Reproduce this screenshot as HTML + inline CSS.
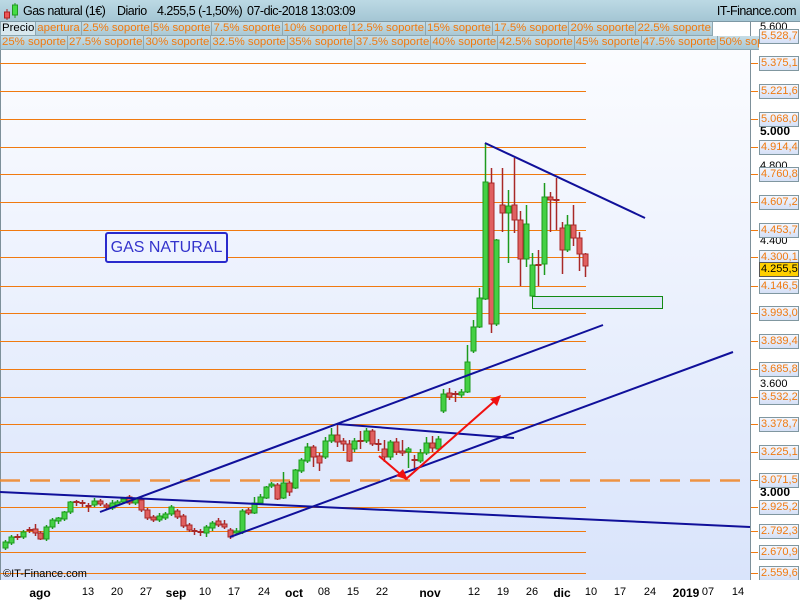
<!DOCTYPE html>
<html><head><meta charset="utf-8"><style>
*{margin:0;padding:0;box-sizing:border-box}
body{width:800px;height:600px;overflow:hidden;font-family:"Liberation Sans",sans-serif;background:#fff;position:relative}
#hdr{position:absolute;left:0;top:0;width:800px;height:22px;background:linear-gradient(#bcd9e4,#a4c6d4);border-bottom:1px solid #7d98a4;font-size:12.5px;color:#000}
#hdr span{position:absolute;top:4px;white-space:nowrap;letter-spacing:-0.5px}
.row{position:absolute;left:0;height:14px;white-space:nowrap;font-size:11.4px;line-height:13px}
.row span{display:inline-block;height:14px;padding:0 1px;background:linear-gradient(#c6dde6,#a9c8d4);border:1px solid #8ea8b2;border-top:none;color:#f07a10;margin-right:-1px}
.row span.p{background:#d8e8ee;color:#000}
#ax{position:absolute;left:0;top:580px;width:800px;height:20px;background:#fff;font-size:11px}
#ax div{position:absolute;top:6px;transform:translateX(-50%)}
#ax b{font-weight:bold;font-size:12px}
.lb{position:absolute;left:759px;width:40px;height:15px;border:1px solid #8097a0;background:linear-gradient(#f4f7ff,#d5e0f6);color:#f07a10;font-size:11px;line-height:13px;padding-left:1px}
.bk{position:absolute;left:760px;font-size:11px;color:#000;line-height:11px}
</style></head><body>
<svg id="c" width="800" height="600" style="position:absolute;left:0;top:0">
<defs><linearGradient id="bg" x1="0" y1="0" x2="0" y2="1"><stop offset="0" stop-color="#fbfcff"/><stop offset="1" stop-color="#d9e4fb"/></linearGradient></defs>
<rect x="0" y="50" width="750" height="530" fill="url(#bg)"/>
<rect x="750" y="22" width="50" height="558" fill="#fff"/>
<line x1="750.5" y1="22" x2="750.5" y2="580" stroke="#7d909a" stroke-width="1"/>
<line x1="0" y1="580.5" x2="750" y2="580.5" stroke="#7d909a" stroke-width="1"/>
<line x1="0.5" y1="50" x2="0.5" y2="580" stroke="#7d909a"/>
<g id="g"></g>
</svg>
<div id="hdr"><svg width="20" height="20" style="position:absolute;left:2px;top:1px"><line x1="5" y1="8" x2="5" y2="19" stroke="#a22"/><rect x="2.5" y="11" width="5" height="6" fill="#e55" stroke="#a22"/><line x1="13" y1="2" x2="13" y2="17" stroke="#292"/><rect x="10.5" y="4" width="5" height="10" fill="#4d4" stroke="#292"/></svg><span style="left:23px">Gas natural (1€)</span><span style="left:117px">Diario</span><span style="left:157px">4.255,5 (-1,50%)</span><span style="left:247px">07-dic-2018 13:03:09</span><span style="right:4px">IT-Finance.com</span></div>
<div class="row" style="top:22px"><span class="p">Precio</span><span>apertura</span><span>2.5% soporte</span><span>5% soporte</span><span>7.5% soporte</span><span>10% soporte</span><span>12.5% soporte</span><span>15% soporte</span><span>17.5% soporte</span><span>20% soporte</span><span>22.5% soporte</span></div>
<div class="row" style="top:36px;width:759px;overflow:hidden"><span>25% soporte</span><span>27.5% soporte</span><span>30% soporte</span><span>32.5% soporte</span><span>35% soporte</span><span>37.5% soporte</span><span>40% soporte</span><span>42.5% soporte</span><span>45% soporte</span><span>47.5% soporte</span><span>50% soporte</span></div>
<div class="bk" style="top:22px">5.600</div>
<div class="bk" style="top:126px;font-weight:bold;font-size:12px">5.000</div>
<div class="bk" style="top:161px">4.800</div>
<div class="bk" style="top:236px">4.400</div>
<div class="bk" style="top:379px">3.600</div>
<div class="bk" style="top:487px;font-weight:bold;font-size:12px">3.000</div>
<div id="labels"></div>
<div style="position:absolute;left:3px;top:568px;font-size:11px">©IT-Finance.com</div>
<div style="position:absolute;left:105px;top:232px;width:123px;height:31px;border:2px solid #2a2acc;border-radius:3px;color:#3333cc;font-size:16px;line-height:27px;text-align:center;background:#eef3ff">GAS NATURAL</div>
<div id="ax"><div style="left:40px"><b>ago</b></div><div style="left:88px">13</div><div style="left:117px">20</div><div style="left:146px">27</div><div style="left:176px"><b>sep</b></div><div style="left:205px">10</div><div style="left:234px">17</div><div style="left:264px">24</div><div style="left:294px"><b>oct</b></div><div style="left:324px">08</div><div style="left:353px">15</div><div style="left:382px">22</div><div style="left:430px"><b>nov</b></div><div style="left:474px">12</div><div style="left:503px">19</div><div style="left:532px">26</div><div style="left:562px"><b>dic</b></div><div style="left:591px">10</div><div style="left:620px">17</div><div style="left:650px">24</div><div style="left:686px"><b>2019</b></div><div style="left:708px">07</div><div style="left:738px">14</div></div>
<script>
var ns="http://www.w3.org/2000/svg",g=document.getElementById("g");
function el(t,a){var e=document.createElementNS(ns,t);for(var k in a)e.setAttribute(k,a[k]);g.appendChild(e);return e}
var lv=[["5.528,7",36,0],["5.375,1",63,1],["5.221,6",91,1],["5.068,0",119,1],["4.914,4",147,1],["4.760,8",174,1],["4.607,2",202,1],["4.453,7",230,1],["4.300,1",257,1],["4.146,5",286,1],["3.993,0",313,1],["3.839,4",341,1],["3.685,8",369,1],["3.532,2",397,1],["3.378,7",424,1],["3.225,1",452,1],["3.071,5",480,2],["2.925,2",507,1],["2.792,3",531,1],["2.670,9",552,1],["2.559,6",573,1]];
var L="";
lv.forEach(function(l){
 if(l[2]==1)el("line",{x1:0,y1:l[1]+.5,x2:586,y2:l[1]+.5,stroke:"#f07a10","stroke-width":1});
 if(l[2]==2)el("line",{x1:0,y1:l[1]+.5,x2:750,y2:l[1]+.5,stroke:"#f08a30","stroke-width":2.5,"stroke-dasharray":"20,10","opacity":.9});
 el("line",{x1:751,y1:l[1]+.5,x2:758,y2:l[1]+.5,stroke:"#f07a10"});
 L+='<div class="lb" style="top:'+(l[1]-7)+'px">'+l[0]+'</div>';
});
L+='<div class="lb" style="top:262px;background:#ffd000;color:#000;border-color:#555">4.255,5</div>';
document.getElementById("labels").innerHTML=L;
var c=[[5,548,542,550,540],[11,543,537,545,535],[17,537,537,540,534],[23,537,532,539,530],[29,530,530,533,527],[35,529,533,524,536],[40,533,539,531,540],[46,539,527,541,525],[52,527,520,529,518],[58,521,518,524,517],[64,519,512,521,511],[70,512,502,514,501],[76,502,502,500,506],[82,503,503,500,507],[88,506,506,503,512],[94,505,501,507,498],[100,501,504,499,506],[106,505,507,503,510],[112,508,503,510,500],[117,505,502,506,500],[123,502,499,504,497],[129,497,503,495,505],[135,503,499,505,498],[141,500,510,498,512],[147,510,518,508,520],[153,517,520,515,522],[159,520,516,522,513],[165,518,514,520,512],[171,514,507,516,505],[177,511,517,509,519],[183,516,526,514,528],[189,525,530,523,532],[194,531,531,528,535],[200,532,533,529,536],[206,533,527,537,525],[212,528,523,531,521],[218,521,525,518,527],[224,524,527,520,529],[230,530,537,528,539],[236,533,531,535,528],[242,532,511,534,509],[248,510,513,508,515],[254,513,503,514,497],[260,503,497,505,494],[266,498,487,499,486],[271,486,484,488,482],[277,485,499,483,500],[283,498,483,499,472],[289,483,492,481,496],[295,488,470,489,469],[301,471,460,473,458],[307,461,447,463,443],[313,447,457,445,467],[319,456,463,453,471],[325,457,441,459,437],[331,441,435,443,428],[337,435,442,424,447],[343,441,444,438,451],[349,444,461,440,462],[354,449,441,452,438],[360,441,441,431,449],[366,441,431,443,428],[372,431,444,429,446],[378,444,444,439,451],[384,449,457,440,462],[390,457,442,460,440],[396,442,452,438,455],[402,451,453,440,456],[408,452,449,468,447],[414,460,460,455,468],[420,461,453,463,449],[426,453,443,455,437],[432,443,448,436,452],[438,449,439,451,436],[443,411,394,413,389],[449,393,397,388,400],[455,394,394,391,402],[461,395,392,398,389],[467,392,362,393,345],[473,351,327,353,320],[479,327,298,328,288],[485,299,182,300,143],[491,183,324,168,333],[496,324,240,326,239],[502,205,213,168,232],[508,213,206,263,190],[514,205,220,158,233],[520,220,259,211,286],[526,259,224,267,205],[532,296,265,297,253],[538,265,265,250,286],[544,264,197,275,183],[550,197,200,192,232],[556,200,200,178,230],[562,228,250,222,274],[567,250,225,252,215],[573,225,238,205,246],[579,238,254,232,271],[585,254,266,253,277]];
c.forEach(function(d){var up=d[2]<d[1],col=up?"#1d9a1d":"#a82828",fill=up?"#44d044":"#e06060";
 var hi=Math.min(d[3],d[4],d[1],d[2]),lo=Math.max(d[3],d[4],d[1],d[2]);
 el("line",{x1:d[0]+.5,y1:hi,x2:d[0]+.5,y2:lo,stroke:col,"stroke-width":1.5});
 var t=Math.min(d[1],d[2]),h=Math.abs(d[1]-d[2]);
 if(h<2)el("rect",{x:d[0]-2.5,y:t-1,width:6,height:2,fill:col});
 else el("rect",{x:d[0]-2,y:t,width:5,height:h,fill:fill,stroke:col,"stroke-width":1});
});
var B="#10109a";
[[0,492,750,527],[100,512,603,325],[230,537,733,352],[337,424,514,438],[485,143,645,218]].forEach(function(l){el("line",{x1:l[0],y1:l[1],x2:l[2],y2:l[3],stroke:B,"stroke-width":2})});
el("rect",{x:532.5,y:296.5,width:130,height:12,fill:"#dce6fb",stroke:"#138a13","stroke-width":1});
el("polyline",{points:"379,456 406,479 498,398",fill:"none",stroke:"#f01010","stroke-width":2});
el("polygon",{points:"408,480 396,476 403,469",fill:"#f01010"});
el("polygon",{points:"501,395 490,399 497,406",fill:"#f01010"});
</script>
</body></html>
